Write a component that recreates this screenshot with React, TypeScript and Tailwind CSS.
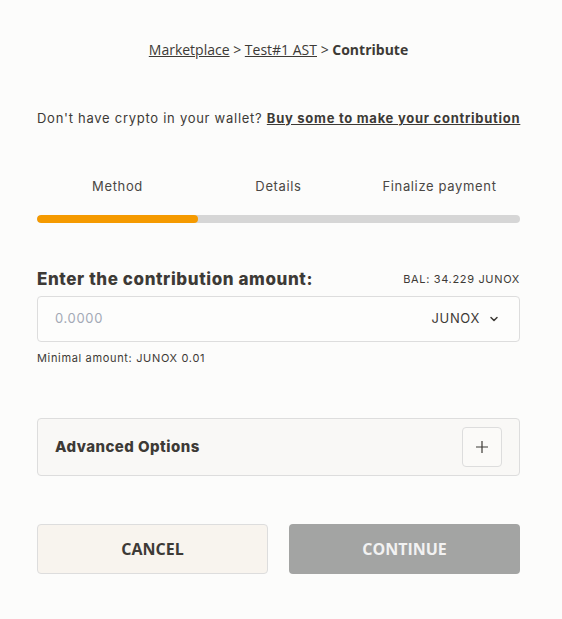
import React from "react";

export default function App() {
  return (
    <div className="min-h-[619px] w-[562px] bg-[#fcfcfb] font-['Inter',sans-serif] text-[#3d3a36]">
      <div className="ml-[37px] flex w-[483px] flex-col">
        <div className="pt-[40px] text-center font-['Open_Sans',sans-serif] text-[14px] leading-[20px] text-[#3d3a36]">
          <span className="underline">Marketplace</span> &gt; <span className="underline">Test#1 AST</span> &gt; <span className="font-bold">Contribute</span>
        </div>

        <div className="mt-[49px] whitespace-nowrap text-[13px] leading-[18px] tracking-[0.056em] text-[#3d3a36]">
          Don't have crypto in your wallet? <span className="font-bold underline">Buy some to make your contribution</span>
        </div>

        <div className="mt-[50px] grid grid-cols-3 text-center text-[13px] leading-[18px] tracking-[0.05em] text-[#4a4744]">
          <div>Method</div>
          <div>Details</div>
          <div>Finalize payment</div>
        </div>
        <div className="mt-[20px] h-[8px] w-full overflow-hidden rounded-full bg-[#d6d6d6]">
          <div className="h-full w-1/3 rounded-full bg-[#f59a00]" />
        </div>

        <div className="mt-[45px] flex items-center justify-between">
          <div className="text-[17px] font-extrabold leading-[22px] tracking-[0.035em] text-[#3d3a36]">Enter the contribution amount:</div>
          <div className="text-[11px] tracking-[0.06em] text-[#3d3a36]">BAL: 34.229 JUNOX</div>
        </div>
        <div className="mt-[6px] flex h-[46px] items-center justify-between rounded-[4px] border border-[#dddddd] bg-[#fdfdfc] pl-[17px] pr-[19px]">
          <span className="text-[13px] tracking-[0.05em] text-[#a3a9b6]">0.0000</span>
          <span className="flex items-center gap-[8px] text-[13px] tracking-[0.05em] text-[#3d3a36]">
            JUNOX
            <svg width="12" height="12" viewBox="0 0 24 24" fill="none" stroke="#3d3a36" strokeWidth="3" strokeLinecap="round" strokeLinejoin="round"><path d="M6 9l6 6 6-6" /></svg>
          </span>
        </div>
        <div className="mt-[9px] text-[11px] leading-[14px] tracking-[0.06em] text-[#3d3a36]">Minimal amount: JUNOX 0.01</div>

        <div className="mt-[53px] flex h-[58px] items-center justify-between rounded-[4px] border border-[#dddddd] bg-[#f9f8f6] pl-[17px] pr-[17px]">
          <span className="text-[15px] font-extrabold tracking-[0.03em] text-[#3d3a36]">Advanced Options</span>
          <div className="flex h-[40px] w-[40px] items-center justify-center rounded-[4px] border border-[#dddddd] bg-[#fbfaf8]">
            <svg width="14" height="14" viewBox="0 0 14 14" stroke="#3d3a36" strokeWidth="1.2"><path d="M7 1v12M1 7h12" /></svg>
          </div>
        </div>

        <div className="mt-[48px] grid grid-cols-2 gap-[21px] font-['Open_Sans',sans-serif]">
          <button className="h-[50px] rounded-[4px] border border-[#dddddd] bg-[#f8f4ee] text-[16px] font-bold text-[#3d3a36]">CANCEL</button>
          <button className="h-[50px] rounded-[4px] bg-[#a3a4a3] text-[16px] font-bold text-[#f2f2f2]">CONTINUE</button>
        </div>
      </div>
    </div>
  );
}
